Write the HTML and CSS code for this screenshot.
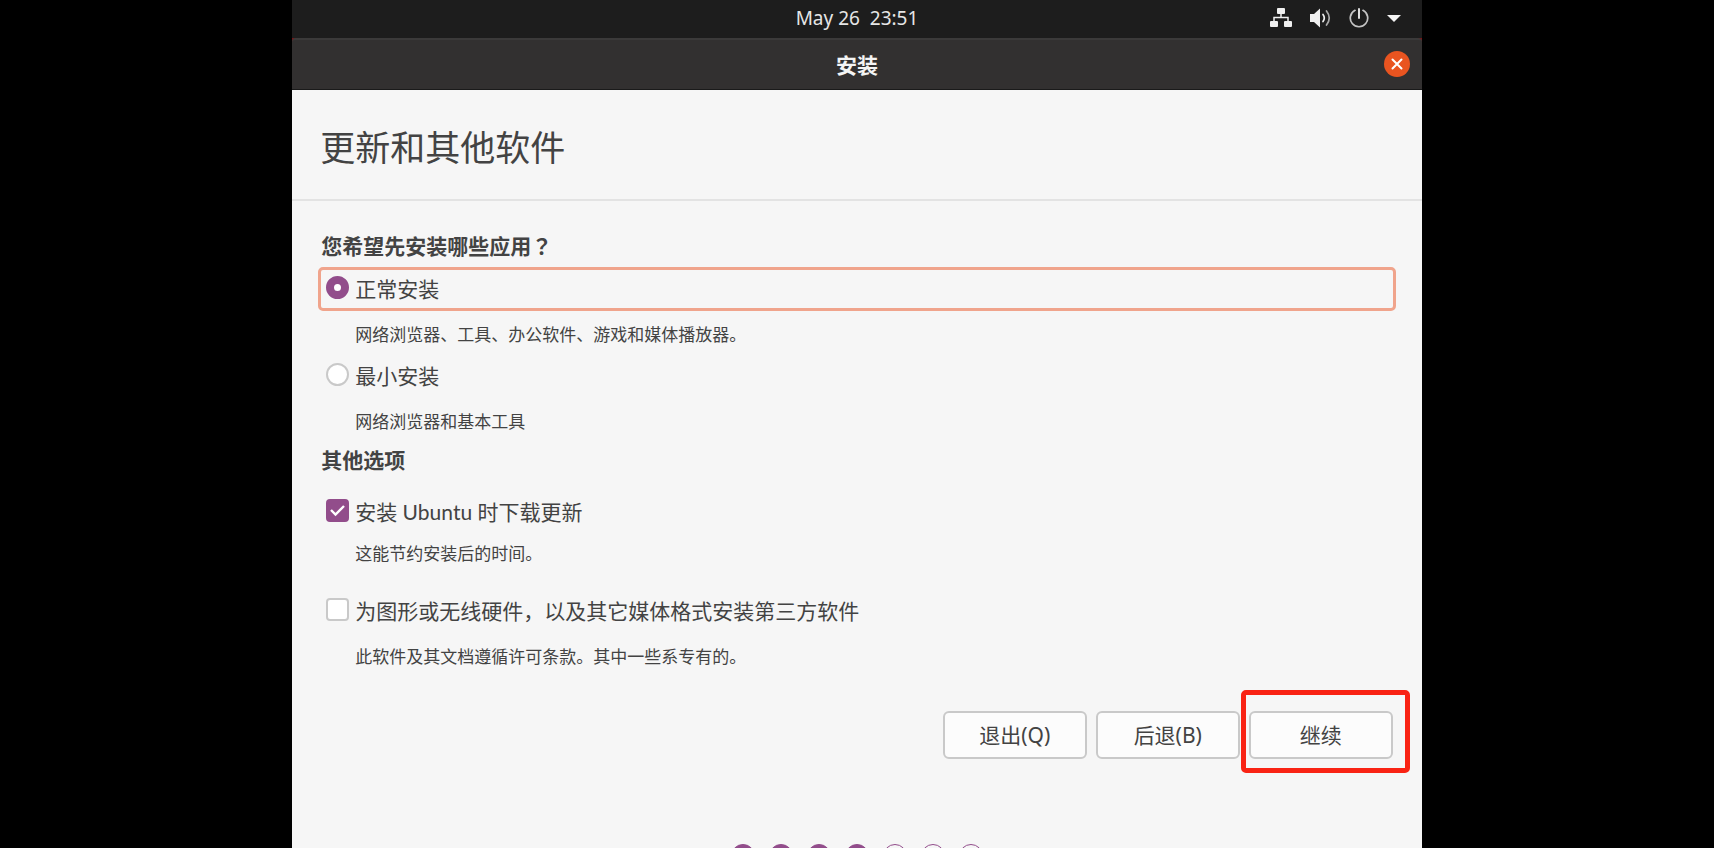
FILE: index.html
```html
<!DOCTYPE html>
<html lang="zh-CN">
<head>
<meta charset="utf-8">
<title>安装</title>
<link rel="stylesheet" href="styles.css">
</head>
<body>
<div class="screen">
  <header class="topbar">
    <time class="clock">May 26&nbsp; 23:51</time>
    <div class="tray">
      <svg class="tray-icon" width="22" height="20" viewBox="0 0 22 20" aria-hidden="true">
        <g fill="#f0f0f0"><rect x="7" y="0" width="8" height="6" rx="1"/><rect x="0" y="13" width="8" height="6" rx="1"/><rect x="14" y="13" width="8" height="6" rx="1"/></g>
        <path d="M11 5v4.5M4 14V9.5h14V14" fill="none" stroke="#f0f0f0" stroke-width="1.5"/>
      </svg>
      <svg class="tray-icon" width="21" height="20" viewBox="0 0 21 20" aria-hidden="true">
        <path d="M0 6h4l6-5.500v19L4 14H0z" fill="#f0f0f0"/>
        <g fill="none" stroke-width="1.7" stroke-linecap="round"><path d="M13 6.500q2.600 3.500 0 7" stroke="#f0f0f0"/><path d="M16.500 3q5.500 7 0 14" stroke="#a8a8a8"/></g>
      </svg>
      <svg class="tray-icon" width="20" height="20" viewBox="0 0 20 20" aria-hidden="true">
        <path d="M6 2.300a8.700 8.700 0 1 0 8 0" fill="none" stroke="#c4c4c4" stroke-width="1.700" stroke-linecap="round"/>
        <path d="M10 1v9" stroke="#f4f4f4" stroke-width="1.800" stroke-linecap="round"/>
      </svg>
      <svg class="tray-icon" width="14" height="20" viewBox="0 0 14 20" aria-hidden="true">
        <path d="M0 7h14l-7 7z" fill="#f4f4f4"/>
      </svg>
    </div>
  </header>

  <div class="window">
    <div class="titlebar">
      <span class="title">安装</span>
      <button class="close" type="button" aria-label="关闭">
        <svg width="12" height="12" viewBox="0 0 12 12" aria-hidden="true"><path d="M1.500 1.500l9 9M10.500 1.500l-9 9" stroke="#ffffff" stroke-width="2" stroke-linecap="round"/></svg>
      </button>
    </div>
  </div>

  <main class="page">
    <div class="page-header"><h1>更新和其他软件</h1></div>
    <form class="form">
      <h2>您希望先安装哪些应用<span class="mark" lang="zh-TW">？</span></h2>
      <label class="option focused"><input class="radio" type="radio" name="kind" checked><span>正常安装</span></label>
      <p class="hint">网络浏览器、工具、办公软件、游戏和媒体播放器。</p>
      <label class="option"><input class="radio" type="radio" name="kind"><span>最小安装</span></label>
      <p class="hint">网络浏览器和基本工具</p>

      <h2 class="other">其他选项</h2>
      <label class="option"><input class="check" type="checkbox" checked><span class="latin">安装 Ubuntu 时下载更新</span></label>
      <p class="hint near">这能节约安装后的时间。</p>
      <label class="option spaced"><input class="check" type="checkbox"><span>为图形或无线硬件，以及其它媒体格式安装第三方软件</span></label>
      <p class="hint">此软件及其文档遵循许可条款。其中一些系专有的。</p>

      <div class="actions">
        <button class="btn" type="button">退出(Q)</button>
        <button class="btn" type="button">后退(B)</button>
        <div class="callout"><button class="btn" type="button">继续</button></div>
      </div>
    </form>
    <div class="steps">
      <i class="dot done"></i><i class="dot done"></i><i class="dot done"></i><i class="dot done"></i><i class="dot"></i><i class="dot"></i><i class="dot"></i>
    </div>
  </main>
</div>
</body>
</html>
```
FILE: styles.css
```css
* { box-sizing: border-box; }

html, body { height: 100%; }

body {
  margin: 0;
  overflow: hidden;
  background: #000000;
  color: #434343;
  font: 21px/30px "Noto Sans", "Noto Sans CJK SC", sans-serif;
}

.screen {
  display: flex;
  flex-direction: column;
  width: 65.9%;
  min-width: 640px;
  min-height: 100%;
  margin: 0 auto;
}

.topbar {
  display: grid;
  grid-template-columns: 1fr auto 1fr;
  align-items: center;
  height: 38px;
  padding: 0 21px 2px;
  background: #1d1d1d;
  color: #e6e6e6;
}

.clock { grid-column: 2; font-size: 19px; }

.tray {
  display: flex;
  justify-content: flex-end;
  gap: 18px;
}

.tray-icon { display: block; }

.window { background: #7a1418; }

.titlebar {
  display: grid;
  grid-template-columns: 1fr auto 1fr;
  align-items: center;
  height: 52px;
  padding: 0 12px;
  border-top: 2px solid #3b3a3a;
  border-bottom: 1px solid #1a1a1a;
  border-radius: 4px 4px 0 0;
  background: #323030;
}

.title { grid-column: 2; color: #f4f4f4; font-weight: 700; }

.close {
  display: grid;
  place-items: center;
  justify-self: end;
  width: 26px;
  height: 26px;
  margin-bottom: 2px;
  padding: 0;
  border: 0;
  border-radius: 50%;
  background: #e95420;
}

.page {
  flex: 1;
  background: #f6f6f6;
}

.page-header {
  padding: 32px 28px 25px;
  border-bottom: 2px solid #e3e3e3;
}

h1 {
  margin: 0;
  font-size: 35px;
  font-weight: 400;
  line-height: 52px;
}

.form { padding: 29px 26px 0; }

h2 {
  margin: 0 0 6px 3px;
  font-size: 21px;
  font-weight: 700;
  line-height: 30px;
}

.mark { font-family: "Noto Sans CJK TC", sans-serif; }

.latin { font-family: Lato, "Noto Sans CJK SC", sans-serif; }

.option {
  display: flex;
  align-items: center;
  gap: 6px;
  height: 44px;
  padding: 0 5px;
  border: 3px solid transparent;
  border-radius: 5px;
}

.focused { border-color: #f0a48c; }

.hint {
  margin: 12px 0 7px 37px;
  font-size: 17px;
  line-height: 24px;
}

.near { margin-top: 8px; }
.spaced { margin-top: 23px; }
.other { margin: 11px 0 15px 3px; }

.radio, .check {
  appearance: none;
  flex: none;
  width: 23px;
  height: 23px;
  margin: 0 0 3px;
  border: 2px solid #c9c9c9;
  background: #ffffff;
}

.radio { border-radius: 50%; }
.check { border-radius: 4px; }

.radio:checked { border: 8px solid #924d8b; }

.check:checked {
  border-color: #924d8b;
  background: #924d8b url("data:image/svg+xml,%3Csvg xmlns='http://www.w3.org/2000/svg' viewBox='0 0 19 19'%3E%3Cpath d='M3 9l4.500 4.500L16 5' fill='none' stroke='white' stroke-width='2.400'/%3E%3C/svg%3E") center / 19px no-repeat;
}

.actions {
  display: flex;
  justify-content: flex-end;
  gap: 9px;
  margin-top: 42px;
  padding-right: 3px;
}

.btn {
  width: 144px;
  height: 48px;
  padding: 0;
  border: 2px solid #c9c9c9;
  border-radius: 6px;
  background: #fcfcfc;
  color: #434343;
  font: inherit;
}

.callout { position: relative; }

.callout::after {
  content: "";
  position: absolute;
  inset: -21px -17px -14px -8px;
  border: 5px solid #f92314;
  border-radius: 5px;
  pointer-events: none;
}

.steps {
  display: flex;
  justify-content: center;
  gap: 14px;
  margin-top: 85px;
}

.dot {
  width: 24px;
  height: 24px;
  border: 1px solid #924d8b;
  border-radius: 50%;
}

.done { background: #924d8b; }
```
